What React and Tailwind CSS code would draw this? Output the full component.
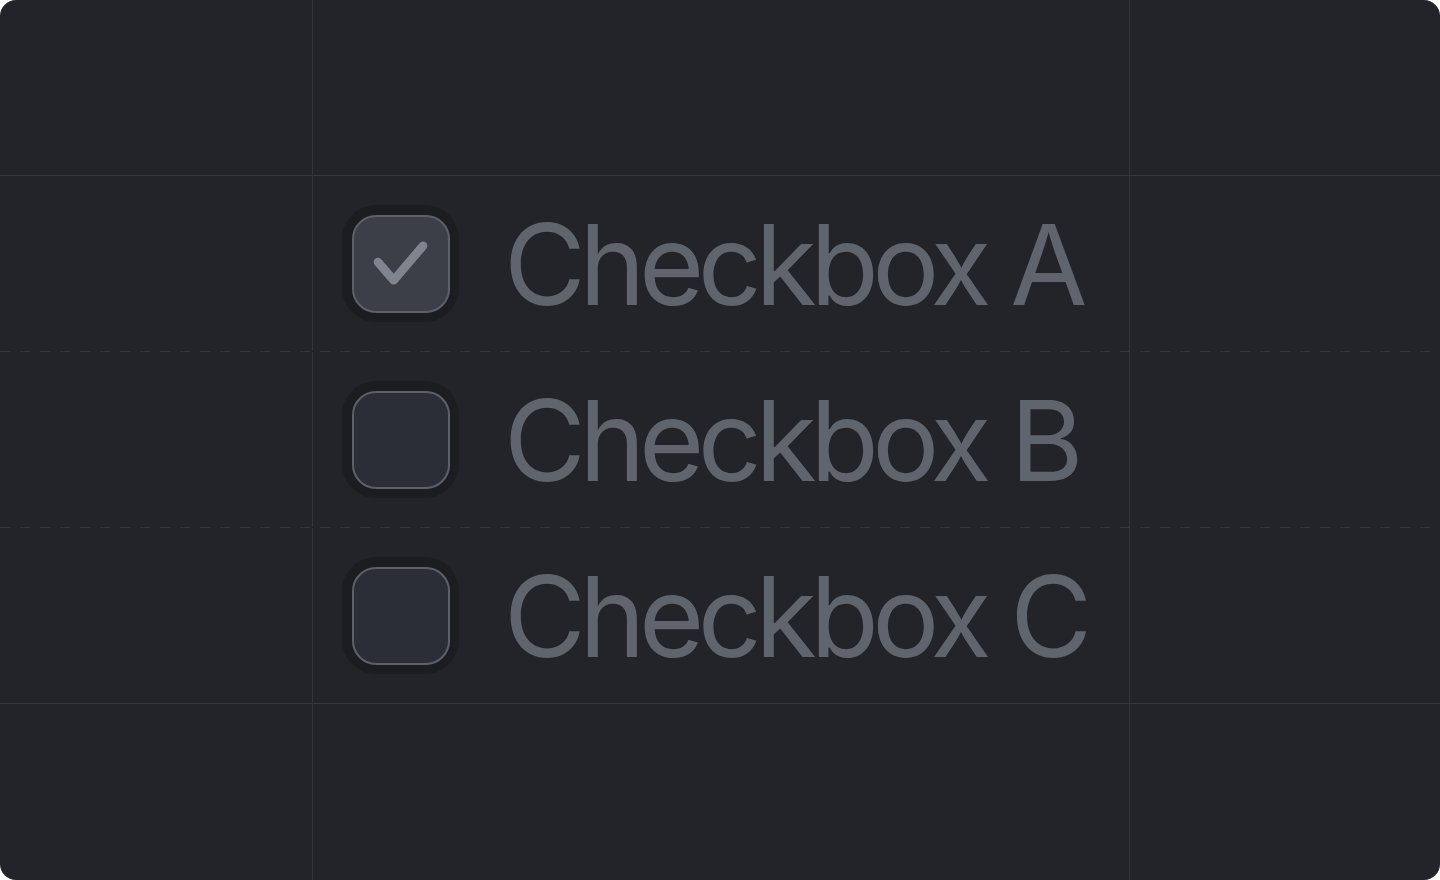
const items = [
  { label: 'Checkbox A', checked: true },
  { label: 'Checkbox B', checked: false },
  { label: 'Checkbox C', checked: false },
];

function Box({ checked }) {
  return (
    <div className="shrink-0 w-[117px] h-[117px] rounded-[34px] bg-[#1c1d21] flex items-center justify-center">
      <div
        className={`w-[98px] h-[98px] rounded-[24px] border-2 border-[#5c6069] flex items-center justify-center ${
          checked ? 'bg-[#3c3f48]' : 'bg-[#2b2e36]'
        }`}
      >
        {checked && (
          <svg width="98" height="98" viewBox="0 0 98 98" fill="none">
            <path
              d="M25 47 L41.5 66 L72 30"
              stroke="#80848e"
              strokeWidth="9"
              strokeLinecap="round"
              strokeLinejoin="round"
            />
          </svg>
        )}
      </div>
    </div>
  );
}

function Dashed() {
  return <div className="h-px w-full bg-[linear-gradient(to_right,#34363c_50%,transparent_50%)] bg-[length:20px_1px]" />;
}

function Row({ children }) {
  return (
    <div className="h-[175px] grid grid-cols-[312px_818px_1fr]">
      <div />
      <div className="border-x border-[#34363c] flex items-center pl-[29px]">{children}</div>
      <div />
    </div>
  );
}

export default function App() {
  return (
    <div className="w-[1440px] h-[880px] bg-white">
      <div className="w-full h-full rounded-[16px] overflow-hidden bg-[#232429] flex flex-col" style={{ fontFamily: 'Inter, "Noto Sans", sans-serif' }}>
        <Row />
        <div className="h-px bg-[#34363c]" />
        {items.map((it, i) => (
          <div key={it.label}>
            <Row>
              <div className="flex items-center gap-[45px]">
                <Box checked={it.checked} />
                <span className="whitespace-nowrap text-[112px] leading-none text-[#60646d] tracking-[-6.5px]">{it.label}</span>
              </div>
            </Row>
            {i < 2 ? <Dashed /> : <div className="h-px bg-[#34363c]" />}
          </div>
        ))}
        <div className="flex-1 grid grid-cols-[312px_818px_1fr]">
          <div />
          <div className="border-x border-[#34363c]" />
          <div />
        </div>
      </div>
    </div>
  );
}
